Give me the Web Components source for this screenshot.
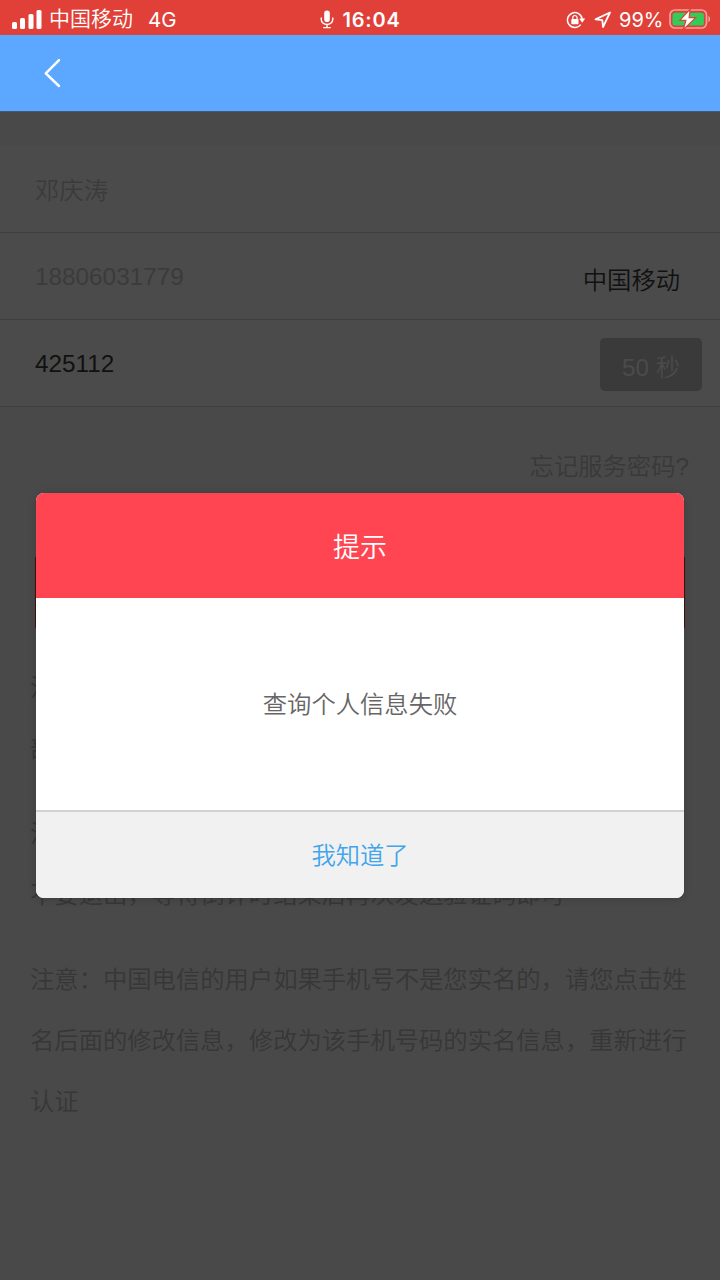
<!DOCTYPE html>
<html lang="zh-CN">
<head>
<meta charset="utf-8">
<title>实名认证</title>
<style>
html,body{margin:0;padding:0}
body{width:720px;height:1280px;overflow:hidden;background:#494949;font-family:"Liberation Sans","Noto Sans CJK SC",sans-serif;font-size:24.32px;font-weight:350}
</style>
</head>
<body>
<auth-page></auth-page>
<script>
const define = (name, html) => {
  const t = document.createElement('template');
  t.innerHTML = html;
  customElements.define(name, class extends HTMLElement {
    constructor() {
      super();
      this.attachShadow({mode: 'open'}).append(t.content.cloneNode(true));
    }
  });
};

define('status-bar', `
<style>
:host{display:grid;grid-template-columns:1fr auto 1fr;align-items:center;height:35px;box-sizing:border-box;padding:2px 10px 0 12px;background:#e04038;color:#fff;font-size:21px;line-height:33px;font-family:Inter,"Noto Sans CJK SC",sans-serif}
div{display:flex;align-items:center;white-space:nowrap}
svg{display:block;flex:none}
.net{margin-left:15px;font-size:20.5px;font-weight:400}
.carrier{margin-left:7px;font-weight:350;padding-bottom:2px}
.time{font-weight:600;font-size:20px;letter-spacing:.8px;margin-left:8px;padding-top:1px}
.mid{margin-left:-1px}
.right{justify-content:flex-end}
.pct{font-weight:400;font-size:20px;margin:0 5px 0 7px;padding-top:1px}
</style>
<div>
<svg width="30" height="20" viewBox="0 0 30 20" fill="#fff"><rect x="0" y="12" width="5" height="7" rx="1.5"/><rect x="8" y="8" width="5" height="11" rx="1.5"/><rect x="16.5" y="4" width="5" height="15" rx="1.5"/><rect x="24.5" y="0" width="5" height="19" rx="1.5"/></svg>
<span class="carrier">中国移动</span><span class="net">4G</span>
</div>
<div class="mid">
<svg width="14" height="19" viewBox="0 0 14 19" fill="none" stroke="#fff" stroke-width="1.4" stroke-linecap="round"><rect x="4.2" y=".6" width="5.6" height="11.5" rx="2.8" fill="#fff" stroke="none"/><path d="M1.2 8v1.3a5.8 5.2 0 0 0 11.6 0V8M7 14.6v2.7M3.7 17.6h6.6"/></svg>
<span class="time">16:04</span>
</div>
<div class="right">
<svg width="20" height="18" viewBox="0 0 20 18" fill="none" stroke="#fff" stroke-width="1.5"><path d="M14.7 13.6A7.4 7.4 0 1 1 16.2 8"/><path d="M13.2 7.6h6l-3 4.2z" fill="#fff" stroke="none"/><rect x="5.3" y="8" width="7.2" height="5.2" rx=".8" fill="#fff" stroke="none"/><path d="M6.8 8.4V6.6a2.1 2.1 0 0 1 4.2 0v1.8" stroke-width="1.2"/></svg>
<svg style="margin-left:8px" width="18" height="18" viewBox="0 0 18 18" fill="none" stroke="#fff" stroke-width="1.8" stroke-linejoin="round"><path d="M16 1.5 1.5 8.4l6.8.7.7 6.9z"/></svg>
<span class="pct">99%</span>
<svg width="41.5" height="21" viewBox="0 0 41.5 21"><rect x="1" y="1" width="36.5" height="18" rx="5" fill="none" stroke="#f2a19d" stroke-width="1.7"/><path d="M39.4 7v6c2.4-1 2.4-5 0-6z" fill="#f2a19d"/><rect x="3.5" y="3.7" width="31.4" height="12.8" rx="2.6" fill="#32cd59"/><path d="M21.2.2 10.8 11.4h6.1L14.3 20.6 26.7 8.7h-6.6z" fill="#fff" stroke="#e04038" stroke-width="1.2"/></svg>
</div>`);

define('nav-bar', `
<style>
:host{display:flex;align-items:center;height:77px;box-sizing:border-box;padding-left:43px;background:#5ca7ff;border-bottom:1px solid #44597a}
svg{display:block}
</style>
<svg width="20" height="30" viewBox="0 0 20 30" fill="none" stroke="#fff" stroke-width="2.5" stroke-linecap="round" stroke-linejoin="round"><path d="M16 2.2 2.8 15.3 16 28"/></svg>`);

define('form-row', `
<style>
:host{display:flex;align-items:center;justify-content:space-between;height:87px;box-sizing:border-box;padding:2px 18px 0 35px;background:#4b4b4b;border-bottom:1px solid #404040;color:#3b3b3b;white-space:nowrap}
:host([strong]){color:#111}
:host([name-row]){padding-top:0;padding-bottom:2px}
</style>
<slot></slot><slot name="end"></slot>`);

define('count-button', `
<style>
:host{display:flex;align-items:center;justify-content:center;width:102px;height:53px;box-sizing:border-box;padding-top:2px;border-radius:5px;background:#3a3a3a;color:#4b4b4b}
</style>
<slot></slot>`);

define('note-text', `
<style>
:host{display:block;height:121.5px;margin:0 0 24.5px 30px;line-height:60.75px;color:#373737;white-space:nowrap}
</style>
<slot></slot>`);

define('alert-dialog', `
<style>
:host{position:absolute;left:36px;top:493px;width:648px;height:405px;display:flex;flex-direction:column;border-radius:8px;overflow:hidden;background:#fff;box-shadow:0 1px 9px rgba(0,0,0,.18);text-align:center}
header{height:105px;line-height:110px;background:#ff4551;color:#fff;font-size:27px}
main{flex:1;display:flex;align-items:center;justify-content:center;color:#666;padding-bottom:3px}
footer{height:88px;box-sizing:border-box;border-top:2px solid #d2d2d2;line-height:88px;background:#f1f1f1;color:#42a5ec}
</style>
<header><slot name="title"></slot></header><main><slot></slot></main><footer><slot name="action"></slot></footer>`);

define('auth-page', `
<style>
:host{display:flex;flex-direction:column;position:relative;width:720px;height:1280px;overflow:hidden;background:#494949}
.form{margin-top:34px}
.carrier{margin-right:22px;padding-top:2px;color:#111}
.forgot{height:120px;line-height:120px;margin-right:31px;text-align:right;color:#393939}
.submit{height:71px;margin:30px 35px;background:#421112}
</style>
<status-bar></status-bar>
<nav-bar></nav-bar>
<div class="form">
<form-row name-row>邓庆涛</form-row>
<form-row>18806031779<span class="carrier" slot="end">中国移动</span></form-row>
<form-row strong>425112<count-button slot="end">50 秒</count-button></form-row>
</div>
<div class="forgot">忘记服务密码?</div>
<div class="submit"></div>
<note-text>注<br>部</note-text>
<note-text>注<br>不要退出，等待倒计时结果后再次发送验证码即可</note-text>
<note-text>注意：中国电信的用户如果手机号不是您实名的，请您点击姓<br>名后面的修改信息，修改为该手机号码的实名信息，重新进行<br>认证</note-text>
<alert-dialog><span slot="title">提示</span>查询个人信息失败<span slot="action">我知道了</span></alert-dialog>`);
</script>
</body>
</html>
